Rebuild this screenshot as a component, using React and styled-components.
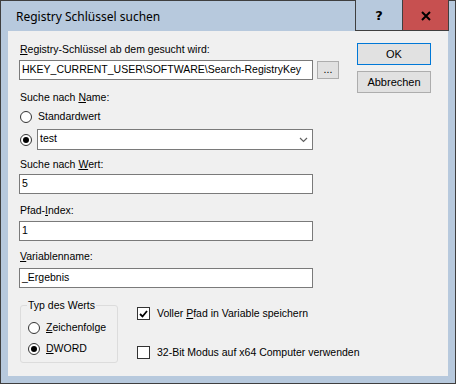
import React from "react";
import styled, { createGlobalStyle } from "styled-components";

const Global = createGlobalStyle`
  html, body { margin: 0; padding: 0; background: #ffffff; }
  * { box-sizing: border-box; }
`;

const Window = styled.div`
  width: 456px;
  height: 384px;
  border: 1px solid #3f3f3f;
  background: #b7c9dd;
  display: flex;
  flex-direction: column;
  padding: 0 7px 7px 7px;
  font-family: "Liberation Sans", Arial, sans-serif;
  font-size: 10.5px;
  line-height: 13px;
  color: #000;
`;

const TitleBar = styled.div`
  height: 30px;
  display: flex;
  align-items: stretch;
  margin: 0 -7px;
`;

const Title = styled.div`
  flex: 1;
  padding: 8px 0 0 15px;
  font-family: "Noto Sans", "Open Sans", sans-serif;
  font-size: 12px;
  line-height: 16px;
  color: #000;
`;

const CaptionButton = styled.div`
  width: ${(p) => p.$w}px;
  margin-top: -1px;
  height: 31px;
  border: 1px solid #3f3f3f;
  border-top: none;
  border-left-width: ${(p) => (p.$first ? 1 : 0)}px;
  background: ${(p) => p.$bg};
  display: flex;
  align-items: center;
  justify-content: center;
  padding-top: 1px;
  font-family: "DejaVu Sans", sans-serif;
  font-weight: bold;
  font-size: 13px;
  color: #000;
`;

const FrameGap = styled.div`
  width: 6px;
`;

const Client = styled.div`
  flex: 1;
  background: #f0f0f0;
  display: flex;
  padding: 12px 0 0 11px;
`;

const LeftCol = styled.div`
  width: 320px;
  display: flex;
  flex-direction: column;
`;

const RightCol = styled.div`
  margin-left: 18px;
  display: flex;
  flex-direction: column;
  gap: 6px;
`;

const Label = styled.div`
  padding-left: 1px;
  margin-top: ${(p) => p.$mt || 0}px;
  height: 13px;
  white-space: nowrap;
`;

const U = styled.span`
  text-decoration: underline;
  text-underline-offset: 1px;
`;

const Row = styled.div`
  display: flex;
  align-items: center;
  margin-top: ${(p) => p.$mt || 0}px;
  gap: ${(p) => p.$gap || 0}px;
`;

const TextBox = styled.div`
  width: ${(p) => p.$w || 294}px;
  height: ${(p) => p.$h || 20}px;
  border: 1px solid #7a7a7a;
  background: #fff;
  padding: 2px 2px 0 2px;
  white-space: nowrap;
  overflow: hidden;
  margin-top: ${(p) => p.$mt || 0}px;
  display: flex;
  justify-content: space-between;
  flex: none;
`;

const SmallButton = styled.div`
  width: 22px;
  height: 18px;
  border: 1px solid #adadad;
  background: #e1e1e1;
  display: flex;
  align-items: center;
  justify-content: center;
  padding-bottom: 2px;
`;

const PushButton = styled.div`
  width: 74px;
  height: 22px;
  border: 1px solid ${(p) => (p.$default ? "#0078d7" : "#adadad")};
  background: #e1e1e1;
  display: flex;
  align-items: center;
  justify-content: center;
  font-size: 11px;
`;

const RadioCircle = styled.span`
  width: 12px;
  height: 12px;
  border-radius: 50%;
  border: 1px solid #333;
  background: #fff;
  display: flex;
  align-items: center;
  justify-content: center;
  flex: none;
  margin-left: ${(p) => p.$ml || 0}px;
  &::after {
    content: "";
    width: 6px;
    height: 6px;
    border-radius: 50%;
    background: ${(p) => (p.$checked ? "#000" : "transparent")};
  }
`;

const Option = styled.div`
  display: flex;
  align-items: center;
  height: 13px;
  gap: ${(p) => p.$gap || 6}px;
  margin-top: ${(p) => p.$mt || 0}px;
  white-space: nowrap;
`;

const CheckBox = styled.span`
  width: 13px;
  height: 13px;
  border: 1px solid #333;
  background: #fff;
  display: flex;
  align-items: center;
  justify-content: center;
  flex: none;
`;

const Bottom = styled.div`
  display: flex;
  margin-top: ${(p) => p.$mt || 0}px;
`;

const Group = styled.fieldset`
  margin: 0 0 0 1px;
  flex: none;
  width: 98px;
  min-width: 98px;
  border: 1px solid #dcdcdc;
  border-radius: 3px;
  padding: 0 6px 7px 7px;
  display: flex;
  flex-direction: column;
`;

const Legend = styled.legend`
  padding: 0 1px 0 1px;
  margin-left: -1px;
  line-height: 13px;
`;

const CheckCol = styled.div`
  margin-left: 19px;
  display: flex;
  flex-direction: column;
`;

function Radio({ checked, ml, children, mt }) {
  return (
    <Option $mt={mt}>
      <RadioCircle $checked={checked} $ml={ml} />
      {children}
    </Option>
  );
}

function Check({ checked, children, mt }) {
  return (
    <Option $mt={mt} $gap={7}>
      <CheckBox>
        {checked && (
          <svg width="9" height="8" viewBox="0 0 9 8">
            <path d="M1 4 L3.5 6.5 L8 1" fill="none" stroke="#000" strokeWidth="1.8" />
          </svg>
        )}
      </CheckBox>
      {children}
    </Option>
  );
}

export default function App() {
  return (
    <>
      <Global />
      <Window>
        <TitleBar>
          <Title>Registry Schlüssel suchen</Title>
          <CaptionButton $w={48} $first $bg="#b7c9dd">?</CaptionButton>
          <CaptionButton $w={46} $bg="#c75050">
            <svg width="10" height="10" viewBox="0 0 10 10">
              <path d="M1 1 L9 9 M9 1 L1 9" stroke="#000" strokeWidth="2" />
            </svg>
          </CaptionButton>
          <FrameGap />
        </TitleBar>
        <Client>
          <LeftCol>
            <Label>
              <U>R</U>egistry-Schlüssel ab dem gesucht wird:
            </Label>
            <Row $mt={4} $gap={4}>
              <TextBox>HKEY_CURRENT_USER\SOFTWARE\Search-RegistryKey</TextBox>
              <SmallButton>...</SmallButton>
            </Row>
            <Label $mt={11}>
              Suche nach <U>N</U>ame:
            </Label>
            <Radio ml={1} mt={6}>Standardwert</Radio>
            <Row $mt={6} $gap={5}>
              <RadioCircle $checked $ml={1} />
              <TextBox $w={276} $h={21}>
                <span>test</span>
                <svg width="9" height="14" viewBox="0 0 9 14" style={{ marginRight: 2 }}>
                  <path d="M1 6 L4.5 9.5 L8 6" fill="none" stroke="#606060" strokeWidth="1.2" />
                </svg>
              </TextBox>
            </Row>
            <Label $mt={8}>
              Suche nach <U>W</U>ert:
            </Label>
            <TextBox $mt={3}>5</TextBox>
            <Label $mt={10}>
              Pfad-<U>I</U>ndex:
            </Label>
            <TextBox $mt={4}>1</TextBox>
            <Label $mt={9}>
              <U>V</U>ariablenname:
            </Label>
            <TextBox $mt={5}>_Ergebnis</TextBox>
            <Bottom $mt={11}>
              <Group>
                <Legend>Typ des Werts</Legend>
                <Radio mt={9}>
                  <span>
                    <U>Z</U>eichenfolge
                  </span>
                </Radio>
                <Radio checked mt={8}>
                  <span>
                    <U>D</U>WORD
                  </span>
                </Radio>
              </Group>
              <CheckCol>
                <Check checked mt={8}>
                  <span>
                    Voller <U>P</U>fad in Variable speichern
                  </span>
                </Check>
                <Check mt={26}>32-Bit Modus auf x64 Computer verwenden</Check>
              </CheckCol>
            </Bottom>
          </LeftCol>
          <RightCol>
            <PushButton $default>OK</PushButton>
            <PushButton>Abbrechen</PushButton>
          </RightCol>
        </Client>
      </Window>
    </>
  );
}
